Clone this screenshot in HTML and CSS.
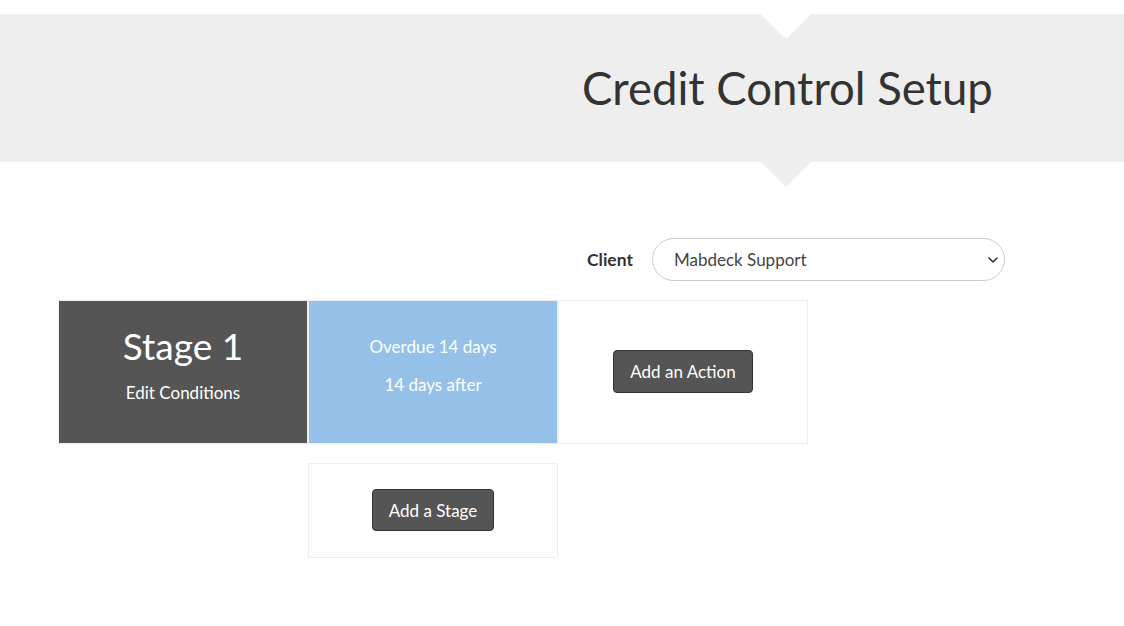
FILE: index.html
```html
<!DOCTYPE html>
<html>
<head>
<meta charset="utf-8">
<link rel="stylesheet" href="styles.css">
</head>
<body>
<header class="banner">
  <h1 class="title">Credit Control Setup</h1>
</header>
<main class="content">
  <div class="client-row">
    <label class="client-label" for="client">Client</label>
    <div class="select-wrap">
      <select id="client" class="client-select">
        <option>Mabdeck Support</option>
      </select>
      <svg class="chev" width="12" height="8" viewBox="0 0 12 8"><path d="M2 2l4 4 4-4" fill="none" stroke="#333" stroke-width="1.6" stroke-linecap="round" stroke-linejoin="round"/></svg>
    </div>
  </div>
  <div class="stages">
    <div class="row">
      <div class="cell stage">
        <div class="stage-name">Stage 1</div>
        <div class="stage-edit">Edit Conditions</div>
      </div>
      <div class="cell cond">
        <div>Overdue 14 days</div>
        <div>14 days after</div>
      </div>
      <div class="cell action">
        <button class="btn">Add an Action</button>
      </div>
    </div>
    <div class="row row2">
      <div class="cell add-stage">
        <button class="btn">Add a Stage</button>
      </div>
    </div>
  </div>
</main>
</body>
</html>
```

FILE: styles.css
```css
* { box-sizing: border-box; }
html, body { margin: 0; padding: 0; background: #fff; }
body { font-family: Lato, "Open Sans", sans-serif; color: #333; }

.banner {
  position: relative;
  margin-top: 14px;
  height: 148px;
  background: #eeeeee;
  display: flex;
  align-items: center;
  padding-left: 582px;
}
.banner::before {
  content: "";
  position: absolute;
  top: 0;
  left: 761px;
  border-left: 25px solid transparent;
  border-right: 25px solid transparent;
  border-top: 25px solid #fff;
}
.banner::after {
  content: "";
  position: absolute;
  top: 100%;
  left: 761px;
  border-left: 25px solid transparent;
  border-right: 25px solid transparent;
  border-top: 25px solid #eeeeee;
}
.title {
  margin: 0;
  font-weight: 400;
  font-size: 45.5px;
  color: #333;
  line-height: 1;
  padding-top: 0;
}

.content { padding-top: 76px; padding-left: 58px; }

.client-row {
  display: flex;
  align-items: center;
  padding-left: 529px;
  height: 43px;
}
.client-label {
  font-weight: 700;
  font-size: 17.5px;
  color: #333;
  margin-right: 19px;
}
.select-wrap { position: relative; }
.client-select {
  appearance: none;
  -webkit-appearance: none;
  width: 353px;
  height: 43px;
  border: 1px solid #ccc;
  border-radius: 22px;
  background: #fff;
  padding: 0 20px 0 21px;
  font-family: Lato, sans-serif;
  font-size: 17px;
  color: #444;
}
.chev { position: absolute; right: 6px; top: 18px; pointer-events: none; }

.stages { margin-top: 19px; }
.row { display: flex; }
.row2 { margin-top: 19px; padding-left: 250px; }
.cell {
  width: 250px;
  border: 1px solid #eeeeee;
  display: flex;
  flex-direction: column;
  align-items: center;
  justify-content: center;
}
.row .cell { height: 144px; }
.row2 .cell { height: 95px; }
.stage { background: #555; color: #fff; border-color: #eee; justify-content: flex-start; padding-top: 26px; }
.stage-name { font-size: 37px; line-height: 37px; }
.stage-edit { font-size: 17px; margin-top: 18px; }
.cond { background: #95c0e8; color: #fff; font-size: 17px; gap: 17px; justify-content: flex-start; padding-top: 35px; border-color: #eee; }
.cond div { line-height: 21px; }
.btn {
  font-family: Lato, sans-serif;
  font-size: 17px;
  color: #fff;
  background: #555;
  border: 1px solid #333;
  border-radius: 4px;
  padding: 0 15px;
  height: 43px;
}
.action .btn { width: 140px; padding: 0; margin-top: -2px; }
.add-stage .btn { width: 122px; padding: 0; height: 42px; margin-top: -1px; }
```
